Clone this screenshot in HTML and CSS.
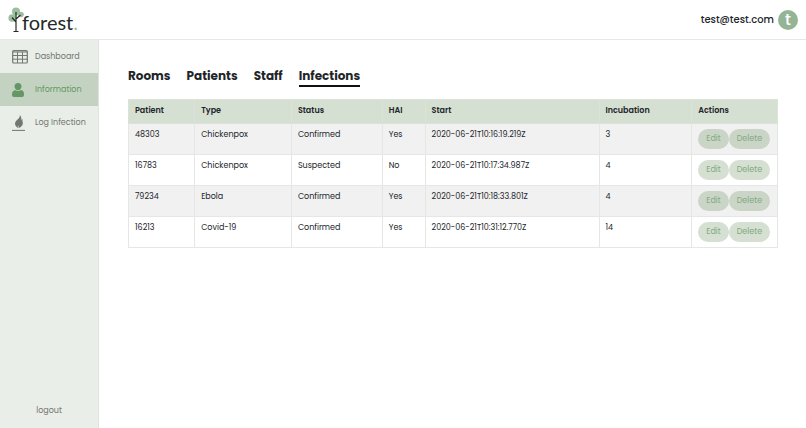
FILE: index.html
```html
<!DOCTYPE html>
<html lang="en">
<head>
    <meta charset="UTF-8">
    <meta name="viewport" content="width=device-width, initial-scale=1.0">
    <title>forest.</title>
    <link rel="stylesheet" href="styles.css">
</head>
<body>
    <!-- Top Bar -->
    <header class="topbar">
        <a href="#" class="brand">
            <svg class="brand-tree" viewBox="0 0 16 26" aria-hidden="true">
                <g fill="#9cc09f">
                    <circle cx="8" cy="4.500" r="4"/>
                    <circle cx="4.200" cy="11" r="3.800"/>
                    <circle cx="13" cy="7.500" r="2.800"/>
                </g>
                <path d="M8 5v19.500M4 10.500l4 4.500M8 12l4.500-4M5.500 24.500h5" fill="none" stroke="#242a28" stroke-width="1.200"/>
            </svg>
            <span class="brand-name">forest<span class="brand-dot">.</span></span>
        </a>
        <div class="account">
            <span class="email">test@test.com</span>
            <span class="avatar">t</span>
        </div>
    </header>

    <div class="layout">
        <!-- Sidebar -->
        <nav class="sidebar">
            <a href="#" class="nav-item">
                <svg class="nav-icon" viewBox="0 0 16 16" aria-hidden="true">
                    <rect x=".7" y="1.700" width="14.600" height="12.300" rx="1" fill="none" stroke="currentColor" stroke-width="1.200"/>
                    <path d="M.7 3h14.600M.7 6.500h14.600M.7 10.200h14.600M5.500 3v11M10.500 3v11" fill="none" stroke="currentColor"/>
                </svg>
                Dashboard
            </a>
            <a href="#" class="nav-item active">
                <svg class="nav-icon" viewBox="1 0 16 16" aria-hidden="true">
                    <path d="M7 1a3.500 3.500 0 0 1 3.500 3.500C10.500 6.500 9 8.200 7 8.200S3.500 6.500 3.500 4.500A3.500 3.500 0 0 1 7 1zM4 8q3 2 6 0c2 .3 3 1.800 3 4V13q0 2-2 2H3q-2 0-2-2v-.8c0-2.200 1-3.700 3-4z" fill="currentColor"/>
                </svg>
                Information
            </a>
            <a href="#" class="nav-item">
                <svg class="nav-icon" viewBox="1 0 16 16" aria-hidden="true">
                    <path d="M8.800 0c.3 2-.8 3.300-2.600 4.800C4 6.700 3.300 9 4.800 11l2 2.200c-.3-1.200 0-2 .6-2.800.3 1 .3 1.800 0 2.800 3-1 5-3.500 4.300-6.200-.3-1-.4-1.800 0-3-.7.3-1.100.8-1.300 1.400C10.500 3.300 10.200 1.300 8.800 0z" fill="currentColor"/>
                    <path d="M1 15.400h13" stroke="currentColor"/>
                </svg>
                Log Infection
            </a>
            <a href="#" class="logout">logout</a>
        </nav>

        <!-- Main Content -->
        <main class="content">
            <nav class="tabs">
                <a href="#">Rooms</a>
                <a href="#">Patients</a>
                <a href="#">Staff</a>
                <a href="#" class="current">Infections</a>
            </nav>

            <table class="infections">
                <colgroup>
                    <col class="col-patient">
                    <col class="col-type">
                    <col class="col-status">
                    <col class="col-hai">
                    <col class="col-start">
                    <col class="col-incubation">
                    <col class="col-actions">
                </colgroup>
                <thead>
                    <tr>
                        <th>Patient</th>
                        <th>Type</th>
                        <th>Status</th>
                        <th>HAI</th>
                        <th>Start</th>
                        <th>Incubation</th>
                        <th>Actions</th>
                    </tr>
                </thead>
                <tbody>
                    <tr>
                        <td>48303</td>
                        <td>Chickenpox</td>
                        <td>Confirmed</td>
                        <td>Yes</td>
                        <td>2020-06-21T10:16:19.219Z</td>
                        <td>3</td>
                        <td><div class="actions"><button type="button">Edit</button><button type="button">Delete</button></div></td>
                    </tr>
                    <tr>
                        <td>16783</td>
                        <td>Chickenpox</td>
                        <td>Suspected</td>
                        <td>No</td>
                        <td>2020-06-21T10:17:34.987Z</td>
                        <td>4</td>
                        <td><div class="actions"><button type="button">Edit</button><button type="button">Delete</button></div></td>
                    </tr>
                    <tr>
                        <td>79234</td>
                        <td>Ebola</td>
                        <td>Confirmed</td>
                        <td>Yes</td>
                        <td>2020-06-21T10:18:33.801Z</td>
                        <td>4</td>
                        <td><div class="actions"><button type="button">Edit</button><button type="button">Delete</button></div></td>
                    </tr>
                    <tr>
                        <td>16213</td>
                        <td>Covid-19</td>
                        <td>Confirmed</td>
                        <td>Yes</td>
                        <td>2020-06-21T10:31:12.770Z</td>
                        <td>14</td>
                        <td><div class="actions"><button type="button">Edit</button><button type="button">Delete</button></div></td>
                    </tr>
                </tbody>
            </table>
        </main>
    </div>
</body>
</html>
```
FILE: styles.css
```css
/* General Styles */
* {
    box-sizing: border-box;
}

body {
    margin: 0;
    min-height: 100vh;
    display: flex;
    flex-direction: column;
    font-family: 'Poppins', 'Inter', sans-serif;
    font-size: 8px;
    line-height: 12px;
    color: #212529;
    background-color: #fff;
}

a {
    color: inherit;
    text-decoration: none;
}

/* Top Bar */
.topbar {
    display: flex;
    justify-content: space-between;
    align-items: center;
    height: 40px;
    padding: 0 8px;
    border-bottom: 1px solid #e6e8e6;
}

.brand {
    display: flex;
    align-items: center;
}

.brand-tree {
    width: 16px;
    height: 26px;
    margin-right: -2px;
}

.brand-name {
    font-family: 'Lato', sans-serif;
    font-size: 20px;
    line-height: 26px;
    padding-top: 4px;
    color: #242a28;
}

.brand-dot {
    color: #9cc09f;
}

.account {
    display: flex;
    align-items: center;
    gap: 4px;
}

.email {
    font-size: 10px;
    font-weight: 500;
}

.avatar {
    display: flex;
    justify-content: center;
    align-items: center;
    width: 20px;
    height: 20px;
    border-radius: 50%;
    background-color: #94b595;
    color: #fff;
    font-size: 16px;
    font-weight: 500;
}

/* Sidebar */
.layout {
    display: flex;
    flex: 1;
}

.sidebar {
    display: flex;
    flex-direction: column;
    width: 99px;
    background-color: #e9eee8;
    border-right: 1px solid #dfe3de;
    color: #737673;
}

.nav-item {
    display: flex;
    align-items: center;
    gap: 7px;
    height: 33px;
    padding-left: 12px;
}

.nav-item.active {
    background-color: #c4d3c1;
    color: #659764;
}

.nav-icon {
    width: 16px;
    height: 16px;
}

.logout {
    margin-top: auto;
    padding-bottom: 11px;
    text-align: center;
}

/* Main Content */
.content {
    flex: 1;
    padding: 27px 28px 28px 29px;
}

.tabs {
    display: flex;
    gap: 16px;
    margin-bottom: 12px;
    font-size: 12px;
    line-height: 18px;
    font-weight: 700;
}

.tabs a {
    border-bottom: 2px solid transparent;
}

.tabs .current {
    border-bottom-color: #111;
}

/* Infections Table */
.infections {
    width: 100%;
    table-layout: fixed;
    border-collapse: collapse;
    border: 1px solid #e4e7e4;
}

.col-patient {
    width: 10.2%;
}

.col-type {
    width: 14.9%;
}

.col-status {
    width: 14%;
}

.col-hai {
    width: 6.6%;
}

.col-start {
    width: 26.8%;
}

.col-incubation {
    width: 14.3%;
}

.col-actions {
    width: 13.2%;
}

.infections th,
.infections td {
    padding: 5px 0 0 6px;
    border: 1px solid #e4e7e4;
    text-align: left;
    vertical-align: top;
}

.infections th {
    height: 24px;
    background-color: #d5dfd2;
    border-color: #dbe3d9;
    font-weight: 600;
}

.infections td {
    height: 31px;
}

.infections tbody tr:nth-child(odd) {
    background-color: #f1f1f1;
}

.actions {
    display: flex;
}

.actions button {
    height: 20px;
    padding: 0 8px;
    border: none;
    border-radius: 10px;
    background-color: #d5dfd2;
    color: #80aa80;
    font-family: inherit;
    font-size: 8px;
    cursor: pointer;
}

.infections tbody tr:nth-child(odd) button {
    background-color: #cad5c7;
}
```
